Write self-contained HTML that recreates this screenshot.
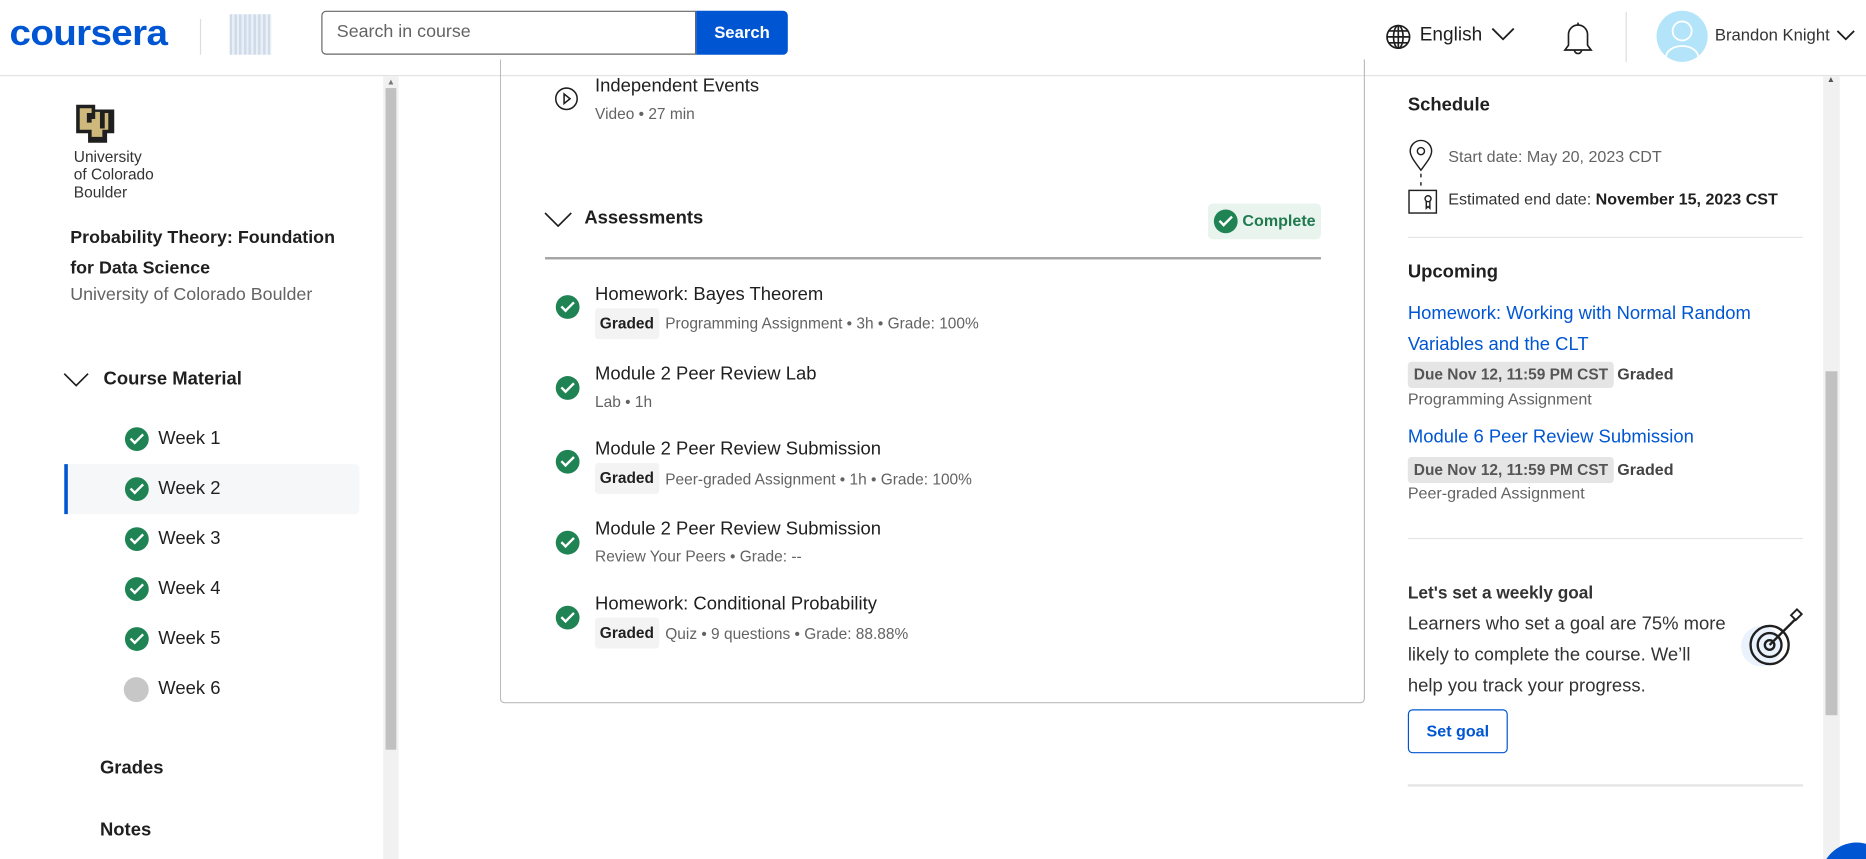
<!DOCTYPE html>
<html><head><meta charset="utf-8"><style>
html,body{margin:0;padding:0;background:#fff;overflow:hidden;width:1866px;height:859px}
#w{position:absolute;left:0;top:0;width:1568px;height:722px;overflow:hidden;transform:scale(1.19005);transform-origin:0 0;font-family:"Liberation Sans",sans-serif;color:#1f1f1f}
.a{position:absolute;white-space:nowrap}
.g{color:#636363}
.b{font-weight:bold}
.chk{position:absolute;width:20px;height:20px;border-radius:50%;background:#1f8354}
.chk:after{content:"";position:absolute;left:7px;top:3px;width:4px;height:9px;border:solid #fff;border-width:0 2.5px 2.5px 0;transform:rotate(45deg)}
.tag{position:absolute;background:#f3f3f3;font-weight:bold;font-size:13px;padding:0 4px;height:26px;line-height:26px;border-radius:3px}
.due{position:absolute;background:#e5e5e5;color:#555;font-weight:bold;font-size:13px;padding:0 5px;height:22px;line-height:22px;border-radius:3px}
</style></head><body><div id="w">
<!-- header -->
<div class="a" style="left:0;top:63px;width:1568px;height:1px;background:#e3e3e3"></div>
<div class="a b" style="left:8px;top:12px;font-size:30px;color:#0056d2;letter-spacing:-0.5px;transform:scaleX(1.08);transform-origin:0 0">coursera</div>
<div class="a" style="left:168px;top:16px;width:1px;height:30px;background:#ddd"></div>
<div class="a" style="left:193px;top:12px;width:35px;height:34px;background:repeating-linear-gradient(90deg,#cfdbe8 0 2px,#e9eff6 2px 4px)"></div>
<div class="a" style="left:270px;top:9px;width:313px;height:35px;border:1px solid #666;border-radius:4px 0 0 4px"></div>
<div class="a g" style="left:283px;top:18px;font-size:15px">Search in course</div>
<div class="a b" style="left:585px;top:9px;width:77px;height:37px;background:#0056d2;color:#fff;font-size:14px;line-height:36px;text-align:center;border-radius:0 4px 4px 0">Search</div>
<svg class="a" style="left:1164px;top:20px" width="22" height="22" viewBox="0 0 22 22" fill="none" stroke="#1f1f1f" stroke-width="1.4"><circle cx="11" cy="11" r="9.5"/><ellipse cx="11" cy="11" rx="4" ry="9.5"/><path d="M1.5 11h19M3 6h16M3 16h16M11 1.5v19"/></svg>
<div class="a" style="left:1193px;top:21px;font-size:16px">English</div>
<svg class="a" style="left:1252px;top:22px" width="22" height="14" fill="none" stroke="#1f1f1f" stroke-width="1.5"><path d="M2 2l9 9 9-9"/></svg>
<svg class="a" style="left:1312px;top:16px" width="28" height="32" fill="none" stroke="#1f1f1f" stroke-width="1.4"><path d="M3 26h22l-3-4V13a8 8 0 0 0-16 0v9z"/><path d="M11 26a3 3 0 0 0 6 0"/><path d="M14 3v2"/></svg>
<div class="a" style="left:1366px;top:10px;width:1px;height:42px;background:#ddd"></div>
<div class="a" style="left:1392px;top:9px;width:43px;height:43px;border-radius:50%;background:#b3e4f9;overflow:hidden"><svg width="43" height="43" fill="none" stroke="#fff" stroke-width="1.5"><circle cx="21.5" cy="17" r="8"/><path d="M8 43v-4a13 9 0 0 1 27 0v4"/></svg></div>
<div class="a" style="left:1441px;top:21px;font-size:14px;color:#333">Brandon Knight</div>
<svg class="a" style="left:1542px;top:24px" width="18" height="12" fill="none" stroke="#1f1f1f" stroke-width="1.5"><path d="M2 2l7 7 7-7"/></svg>
<!-- left scrollbar -->
<div class="a" style="left:322px;top:64px;width:13px;height:658px;background:#f1f1f1"></div>
<div class="a" style="left:324px;top:74px;width:9px;height:556px;background:#c1c1c1"></div>
<div class="a" style="left:325px;top:66px;font-size:7px;color:#777">▲</div>
<!-- sidebar -->
<svg class="a" style="left:62px;top:86px" width="36" height="36"><path d="M2 2h16v4h16v20h-6v8H12v-8H2z" fill="#1f1f1f"/><path d="M5 5h10v4h-4v8h4v-3h3v-6h4v14h4V9h3v14h-5v6h-9v-6H5z" fill="#cfb87c"/></svg>
<div class="a" style="left:62px;top:124px;font-size:13px;line-height:15px;color:#333">University<br>of Colorado<br>Boulder</div>
<div class="a b" style="left:59px;top:187px;font-size:15px;line-height:26px">Probability Theory: Foundation<br>for Data Science</div>
<div class="a g" style="left:59px;top:239px;font-size:15px">University of Colorado Boulder</div>
<svg class="a" style="left:53px;top:312px" width="22" height="14" fill="none" stroke="#1f1f1f" stroke-width="1.4"><path d="M1 2l10 10 10-10"/></svg>
<div class="a b" style="left:87px;top:310px;font-size:15.5px">Course Material</div>
<div class="a" style="left:54px;top:390px;width:248px;height:42px;background:#f5f7f8;border-radius:0 4px 4px 0"></div>
<div class="a" style="left:54px;top:390px;width:3px;height:42px;background:#0056d2"></div>
<div class="chk" style="left:105px;top:359px"></div><div class="a" style="left:133px;top:360px;font-size:15.5px">Week 1</div>
<div class="chk" style="left:105px;top:401px"></div><div class="a" style="left:133px;top:402px;font-size:15.5px">Week 2</div>
<div class="chk" style="left:105px;top:443px"></div><div class="a" style="left:133px;top:444px;font-size:15.5px">Week 3</div>
<div class="chk" style="left:105px;top:485px"></div><div class="a" style="left:133px;top:486px;font-size:15.5px">Week 4</div>
<div class="chk" style="left:105px;top:527px"></div><div class="a" style="left:133px;top:528px;font-size:15.5px">Week 5</div>
<div class="a" style="left:104px;top:569px;width:21px;height:21px;border-radius:50%;background:#c7c7c7"></div><div class="a" style="left:133px;top:570px;font-size:15.5px">Week 6</div>
<div class="a b" style="left:84px;top:637px;font-size:15.5px">Grades</div>
<div class="a b" style="left:84px;top:689px;font-size:15.5px">Notes</div>
<!-- main card -->
<div class="a" style="left:420px;top:50px;width:725px;height:540px;border:1px solid #bbb;border-top:none;border-radius:0 0 4px 4px"></div>
<svg class="a" style="left:466px;top:73px" width="20" height="20" fill="none" stroke="#1f1f1f" stroke-width="1.3"><circle cx="10" cy="10" r="9"/><path d="M8 6l5 4-5 4z"/></svg>
<div class="a" style="left:500px;top:64px;font-size:15.5px">Independent Events</div>
<div class="a g" style="left:500px;top:88px;font-size:13px">Video • 27 min</div>
<svg class="a" style="left:457px;top:177px" width="24" height="14" fill="none" stroke="#1f1f1f" stroke-width="1.4"><path d="M1 2l11 11 11-11"/></svg>
<div class="a b" style="left:491px;top:175px;font-size:15.5px">Assessments</div>
<div class="a" style="left:1015px;top:171px;width:95px;height:30px;background:#e9f4ee;border-radius:4px"></div>
<div class="chk" style="left:1020px;top:176px"></div>
<div class="a b" style="left:1044px;top:178px;font-size:13.5px;color:#1f7a4e">Complete</div>
<div class="a" style="left:458px;top:216px;width:652px;height:2px;background:#a3a3a3"></div>

<div class="chk" style="left:467px;top:248px"></div>
<div class="a" style="left:500px;top:239px;font-size:15.5px">Homework: Bayes Theorem</div>
<div class="tag" style="left:500px;top:259px">Graded</div>
<div class="a g" style="left:559px;top:264px;font-size:13px">Programming Assignment • 3h • Grade: 100%</div>

<div class="chk" style="left:467px;top:316px"></div>
<div class="a" style="left:500px;top:306px;font-size:15.5px">Module 2 Peer Review Lab</div>
<div class="a g" style="left:500px;top:330px;font-size:13px">Lab • 1h</div>

<div class="chk" style="left:467px;top:378px"></div>
<div class="a" style="left:500px;top:369px;font-size:15.5px">Module 2 Peer Review Submission</div>
<div class="tag" style="left:500px;top:389px">Graded</div>
<div class="a g" style="left:559px;top:395px;font-size:13px">Peer-graded Assignment • 1h • Grade: 100%</div>

<div class="chk" style="left:467px;top:446px"></div>
<div class="a" style="left:500px;top:436px;font-size:15.5px">Module 2 Peer Review Submission</div>
<div class="a g" style="left:500px;top:460px;font-size:13px">Review Your Peers • Grade: --</div>

<div class="chk" style="left:467px;top:509px"></div>
<div class="a" style="left:500px;top:499px;font-size:15.5px">Homework: Conditional Probability</div>
<div class="tag" style="left:500px;top:519px">Graded</div>
<div class="a g" style="left:559px;top:525px;font-size:13px">Quiz • 9 questions • Grade: 88.88%</div>
<!-- right column -->
<div class="a b" style="left:1183px;top:80px;font-size:15.5px">Schedule</div>
<svg class="a" style="left:1183px;top:117px" width="30" height="66" fill="none" stroke="#1f1f1f" stroke-width="1.2"><path d="M11 26c-6-8-9-12-9-16a9 9 0 0 1 18 0c0 4-3 8-9 16z"/><circle cx="11" cy="10" r="3"/><path d="M11 29v3M11 36v3" /><rect x="1" y="43" width="23" height="19"/><circle cx="17" cy="50" r="2.5"/><path d="M15.5 52v6l1.5-1.5 1.5 1.5v-6"/></svg>
<div class="a g" style="left:1217px;top:124px;font-size:13.5px">Start date: May 20, 2023 CDT</div>
<div class="a" style="left:1217px;top:160px;font-size:13.5px;color:#333">Estimated end date: <b style="color:#1f1f1f">November 15, 2023 CST</b></div>
<div class="a" style="left:1183px;top:199px;width:332px;height:1px;background:#e5e5e5"></div>
<div class="a b" style="left:1183px;top:220px;font-size:15.5px">Upcoming</div>
<div class="a" style="left:1183px;top:251px;font-size:15.5px;line-height:26px;color:#0056d2">Homework: Working with Normal Random<br>Variables and the CLT</div>
<div class="due" style="left:1183px;top:304px">Due Nov 12, 11:59 PM CST</div>
<div class="a b" style="left:1359px;top:307px;font-size:13.5px;color:#444">Graded</div>
<div class="a g" style="left:1183px;top:328px;font-size:13.5px">Programming Assignment</div>
<div class="a" style="left:1183px;top:359px;font-size:15.5px;color:#0056d2">Module 6 Peer Review Submission</div>
<div class="due" style="left:1183px;top:384px">Due Nov 12, 11:59 PM CST</div>
<div class="a b" style="left:1359px;top:387px;font-size:13.5px;color:#444">Graded</div>
<div class="a g" style="left:1183px;top:407px;font-size:13.5px">Peer-graded Assignment</div>
<div class="a" style="left:1183px;top:452px;width:332px;height:1px;background:#e5e5e5"></div>
<div class="a b" style="left:1183px;top:491px;font-size:14.5px;color:#333">Let's set a weekly goal</div>
<div class="a" style="left:1183px;top:512px;font-size:15.5px;line-height:26px;color:#333">Learners who set a goal are 75% more<br>likely to complete the course. We’ll<br>help you track your progress.</div>
<svg class="a" style="left:1452px;top:508px" width="66" height="62" fill="none" stroke="#1f1f1f" stroke-width="2"><circle cx="28" cy="35" r="17" fill="#eaf2fd" stroke="none"/><circle cx="35" cy="34" r="16"/><circle cx="35" cy="34" r="10"/><circle cx="35" cy="34" r="4"/><path d="M35 34l22-22"/><path d="M53 9l4 4 5-5-4-4z" stroke-width="1.6"/></svg>
<div class="a b" style="left:1183px;top:596px;width:82px;height:35px;border:1px solid #0056d2;border-radius:4px;color:#0056d2;font-size:13.5px;line-height:35px;text-align:center">Set goal</div>
<div class="a" style="left:1183px;top:659px;width:332px;height:2px;background:#e5e5e5"></div>
<!-- main scrollbar -->
<div class="a" style="left:1532px;top:64px;width:14px;height:658px;background:#f1f1f1"></div>
<div class="a" style="left:1534px;top:312px;width:10px;height:289px;background:#c1c1c1"></div>
<div class="a" style="left:1535px;top:64px;font-size:7px;color:#555">▲</div>
<div class="a" style="left:1530px;top:708px;width:60px;height:60px;border-radius:50%;background:#0056d2"></div>
</div></body></html>
